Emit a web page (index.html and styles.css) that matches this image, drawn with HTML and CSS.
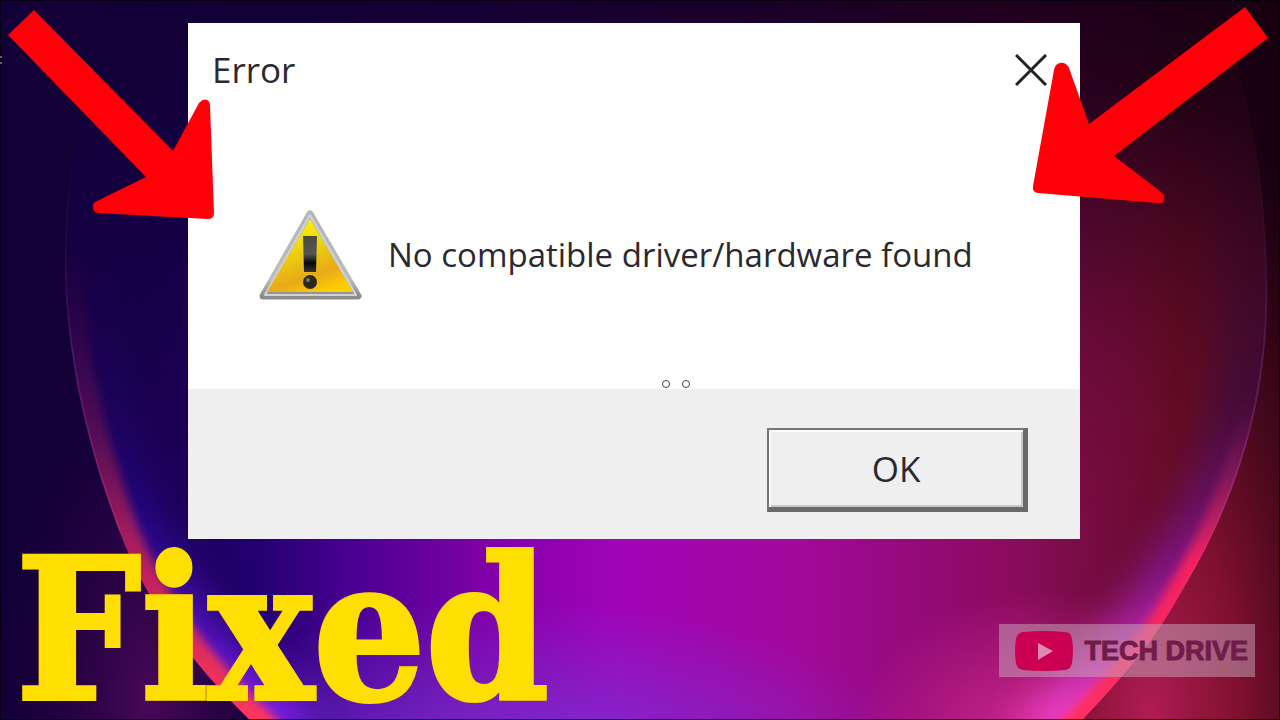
FILE: index.html
```html
<!DOCTYPE html>
<html lang="en">
<head>
<meta charset="utf-8">
<meta name="viewport" content="width=device-width, initial-scale=1">
<title>Fixed: No compatible driver/hardware found</title>
<link rel="stylesheet" href="styles.css">
</head>
<body>
<main class="stage">
  <svg class="wallpaper" viewBox="0 0 1280 720" preserveAspectRatio="none" aria-hidden="true">
    <defs>
      <linearGradient id="outer" x1="0" y1="0" x2="1" y2="0">
        <stop offset="0" stop-color="#120038"/>
        <stop offset=".35" stop-color="#140034"/>
        <stop offset=".8" stop-color="#20001e"/>
        <stop offset="1" stop-color="#180010"/>
      </linearGradient>
      <linearGradient id="inner" x1="0" y1="0" x2="1" y2="0">
        <stop offset="0" stop-color="#1a0048"/>
        <stop offset=".13" stop-color="#1d0058"/>
        <stop offset=".2" stop-color="#220070"/>
        <stop offset=".28" stop-color="#4c0094"/>
        <stop offset=".38" stop-color="#8000a8"/>
        <stop offset=".48" stop-color="#a004b8"/>
        <stop offset=".62" stop-color="#a3089c"/>
        <stop offset=".8" stop-color="#880c5a"/>
        <stop offset=".84" stop-color="#7a0c48"/>
        <stop offset=".92" stop-color="#640c24"/>
        <stop offset="1" stop-color="#5c1030"/>
      </linearGradient>
      <linearGradient id="fade" x1="0" y1="0" x2="0" y2="1">
        <stop offset="0" stop-color="#fff" stop-opacity="0"/>
        <stop offset=".15" stop-color="#fff" stop-opacity=".14"/>
        <stop offset=".5" stop-color="#fff" stop-opacity=".72"/>
        <stop offset=".74" stop-color="#fff"/>
      </linearGradient>
      <mask id="rise" maskUnits="userSpaceOnUse" x="0" y="0" width="1280" height="720">
        <rect width="1280" height="720" fill="url(#fade)"/>
      </mask>
      <linearGradient id="rim" gradientUnits="userSpaceOnUse" x1="0" y1="240" x2="0" y2="720">
        <stop offset="0" stop-color="#801050" stop-opacity="0"/>
        <stop offset=".4" stop-color="#8c1850" stop-opacity=".6"/>
        <stop offset=".7" stop-color="#c82458" stop-opacity=".95"/>
        <stop offset="1" stop-color="#ff3858"/>
      </linearGradient>
      <linearGradient id="rimRight" gradientUnits="userSpaceOnUse" x1="0" y1="400" x2="0" y2="720">
        <stop offset="0" stop-color="#801860" stop-opacity="0"/>
        <stop offset=".25" stop-color="#a82460" stop-opacity=".6"/>
        <stop offset=".5" stop-color="#f42060"/>
        <stop offset="1" stop-color="#ff3060"/>
      </linearGradient>
      <linearGradient id="glow" gradientUnits="userSpaceOnUse" x1="0" y1="200" x2="0" y2="720">
        <stop offset="0" stop-color="#200860" stop-opacity="0"/>
        <stop offset=".6" stop-color="#2808a0" stop-opacity=".6"/>
        <stop offset="1" stop-color="#8420f0"/>
      </linearGradient>
      <linearGradient id="glowRight" gradientUnits="userSpaceOnUse" x1="0" y1="100" x2="0" y2="720">
        <stop offset="0" stop-color="#300838" stop-opacity="0"/>
        <stop offset=".5" stop-color="#3c0c44" stop-opacity=".8"/>
        <stop offset=".78" stop-color="#9018a0" stop-opacity=".85"/>
        <stop offset="1" stop-color="#f040c8"/>
      </linearGradient>
      <linearGradient id="hair" gradientUnits="userSpaceOnUse" x1="0" y1="120" x2="0" y2="540">
        <stop offset="0" stop-color="#6a3c90" stop-opacity="0"/>
        <stop offset=".5" stop-color="#6a3490" stop-opacity=".6"/>
        <stop offset="1" stop-color="#d03870" stop-opacity=".4"/>
      </linearGradient>
      <radialGradient id="ember">
        <stop offset="0" stop-color="#b01c54"/>
        <stop offset=".35" stop-color="#8a1232" stop-opacity=".9"/>
        <stop offset="1" stop-color="#500c18" stop-opacity="0"/>
      </radialGradient>
      <radialGradient id="plum">
        <stop offset="0" stop-color="#480858"/>
        <stop offset="1" stop-color="#300048" stop-opacity="0"/>
      </radialGradient>
      <radialGradient id="violet">
        <stop offset="0" stop-color="#7438d4"/>
        <stop offset="1" stop-color="#7438d4" stop-opacity="0"/>
      </radialGradient>
      <radialGradient id="pink">
        <stop offset="0" stop-color="#d42c94"/>
        <stop offset="1" stop-color="#c82490" stop-opacity="0"/>
      </radialGradient>
      <filter id="soft" filterUnits="userSpaceOnUse" x="-60" y="-60" width="1400" height="860" color-interpolation-filters="sRGB"><feGaussianBlur stdDeviation="5"/></filter>
      <filter id="softer" filterUnits="userSpaceOnUse" x="-60" y="-60" width="1400" height="860" color-interpolation-filters="sRGB"><feGaussianBlur stdDeviation="18"/></filter>
      <clipPath id="petal">
        <path d="M110 0C70 120 60 230 67 310C74 390 93 460 119 530C145 600 190 662 252 722H1080C1125 675 1155 640 1180 594C1225 520 1268 420 1267 290C1266 180 1250 80 1210 0Z"/>
      </clipPath>
    </defs>
    <rect width="1280" height="720" fill="url(#outer)"/>
    <ellipse cx="150" cy="700" rx="150" ry="330" fill="url(#plum)"/>
    <ellipse cx="1150" cy="720" rx="260" ry="640" fill="url(#ember)"/>
    <g mask="url(#rise)">
      <g clip-path="url(#petal)">
        <rect width="1280" height="720" fill="url(#inner)"/>
        <ellipse cx="520" cy="790" rx="420" ry="190" fill="url(#violet)"/>
        <ellipse cx="1040" cy="740" rx="190" ry="150" fill="url(#pink)"/>
        <g fill="none">
          <path filter="url(#softer)" stroke="url(#glow)" stroke-width="90" d="M110 0C70 120 60 230 67 310C74 390 93 460 119 530C145 600 190 662 252 722L280 750"/>
          <path filter="url(#softer)" stroke="url(#glowRight)" stroke-width="90" d="M1050 750L1080 722C1125 675 1155 640 1180 594C1225 520 1268 420 1267 290C1266 180 1250 80 1210 0"/>
          <path filter="url(#soft)" stroke="url(#rim)" stroke-width="38" d="M110 0C70 120 60 230 67 310C74 390 93 460 119 530C145 600 190 662 252 722L280 750"/>
          <path filter="url(#soft)" stroke="url(#rimRight)" stroke-width="28" d="M1050 750L1080 722C1125 675 1155 640 1180 594C1225 520 1268 420 1267 290"/>
          <path stroke="url(#hair)" stroke-width="3" d="M110 0C70 120 60 230 67 310C74 390 93 460 119 530"/>
          <path stroke="url(#hair)" stroke-width="3" d="M1180 594C1225 520 1268 420 1267 290C1266 180 1250 80 1210 0"/>
        </g>
      </g>
    </g>
    <path d="M0 0H1280V720H0Z" fill="none" stroke="#08000c" stroke-opacity=".8" stroke-width="2"/>
    <path d="M0 57h2M0 63h2" stroke="#d8b890" stroke-width="1"/>
  </svg>

  <section class="dialog" role="dialog" aria-labelledby="dialog-title" aria-describedby="dialog-text">
    <header class="titlebar">
      <h1 class="title" id="dialog-title">Error</h1>
      <button class="close" type="button" aria-label="Close">
        <svg viewBox="0 0 32 32" aria-hidden="true"><path d="M1 1L31 31M31 1L1 31"/></svg>
      </button>
    </header>
    <div class="content">
      <svg class="warning" viewBox="0 0 106 96" aria-hidden="true">
        <defs>
          <linearGradient id="metal" x1="0" y1="0" x2="0" y2="1">
            <stop offset="0" stop-color="#b2b4b6"/><stop offset=".8" stop-color="#bcbcbc"/><stop offset="1" stop-color="#8c8c8c"/>
          </linearGradient>
          <linearGradient id="gold" x1=".3" y1="0" x2=".7" y2="1">
            <stop offset="0" stop-color="#fff600"/><stop offset=".45" stop-color="#eccb10"/><stop offset=".75" stop-color="#e9a918"/><stop offset="1" stop-color="#ffd000"/>
          </linearGradient>
          <linearGradient id="bar" x1="0" y1="0" x2="0" y2="1">
            <stop offset="0" stop-color="#4a4a38"/><stop offset=".5" stop-color="#555"/><stop offset=".75" stop-color="#080808"/><stop offset="1" stop-color="#333"/>
          </linearGradient>
        </defs>
        <path d="M52 7L100 89H5Z" fill="url(#metal)" stroke="url(#metal)" stroke-width="7" stroke-linejoin="round"/>
        <path d="M52 8L98 88H7Z" fill="none" stroke="#d0d2d4" stroke-width="2" stroke-linejoin="round"/>
        <path d="M52 12L95 85H9Z" fill="url(#gold)"/>
        <path d="M45 29H59L58 65H46Z" fill="url(#bar)"/>
        <circle cx="52" cy="75" r="7" fill="#292820"/>
        <circle cx="50" cy="73" r="2" fill="#77725a"/>
      </svg>
      <p class="message" id="dialog-text">No compatible driver/hardware found</p>
    </div>
    <svg class="dots" viewBox="0 0 30 10" aria-hidden="true"><circle cx="5" cy="5" r="3.5"/><circle cx="25" cy="5" r="3.5"/></svg>
    <footer class="actions">
      <button class="ok" type="button">OK</button>
    </footer>
  </section>

  <div class="caption">
    <p class="fixed">Fixed</p>
    <div class="channel">
      <svg class="play" viewBox="0 0 58 40" aria-hidden="true">
        <path d="M8 1Q29-1 50 1Q56 1 57 8Q59 20 57 32Q56 38 50 39Q29 41 8 39Q2 38 1 32Q-1 20 1 8Q2 2 8 1Z" fill="#cc0052"/>
        <path d="M23 12L38 20L23 29Z" fill="#dc8aae"/>
      </svg>
      <span class="channel-name">TECH DRIVE</span>
    </div>
  </div>

  <svg class="arrow arrow-left" viewBox="0 0 210 212" aria-hidden="true">
    <path d="M28 2L167 143L193 95Q197 90 201 92Q204 93 204 98L208 205Q208 211 202 211L92 205Q87 204 87 199Q86 195 91 193L140 169L2 27Z"/>
  </svg>
  <svg class="arrow arrow-right" viewBox="0 0 238 200" aria-hidden="true">
    <path d="M214 1L58 118L38 62Q35 56 29 57Q24 58 23 64L2 180Q1 186 7 187L126 197Q132 198 133 194Q134 189 130 186L83 150L237 32Z"/>
  </svg>
</main>
</body>
</html>
```

FILE: styles.css
```css
* {
  box-sizing: border-box;
}

body {
  margin: 0;
  overflow: hidden;
  background: #120038;
  font-family: "Open Sans", "Noto Sans", sans-serif;
}

h1,
p {
  margin: 0;
}

button {
  font: inherit;
  color: inherit;
  cursor: pointer;
}

.stage {
  position: relative;
  isolation: isolate;
  display: flex;
  flex-direction: column;
  min-height: 100vh;
  padding-top: 23px;
}

.wallpaper {
  position: absolute;
  inset: 0;
  z-index: -1;
  width: 100%;
  height: 100%;
}

.dialog {
  position: relative;
  margin: 0 200px 0 188px;
  background: #fff;
  color: #2a2a2e;
}

.titlebar {
  display: flex;
  align-items: center;
  justify-content: space-between;
  padding: 24px 33px 0 24px;
}

.title {
  font-size: 35px;
  line-height: 46px;
  font-weight: 400;
}

.close {
  display: flex;
  padding: 0;
  border: 0;
  background: none;
}

.close svg {
  width: 32px;
  height: 32px;
  fill: none;
  stroke: #222;
  stroke-width: 3;
}

.content {
  display: flex;
  align-items: center;
  gap: 24px;
  padding: 114px 40px 86px 70px;
}

.warning {
  flex: none;
  width: 106px;
  height: 96px;
}

.message {
  font-size: 33px;
  line-height: 48px;
  white-space: nowrap;
}

.dots {
  position: absolute;
  left: 473px;
  bottom: 150px;
  width: 30px;
  height: 10px;
  fill: #fff;
  stroke: #444;
}

.actions {
  display: flex;
  justify-content: flex-end;
  padding: 39px 52px 27px;
  background: #efefef;
}

.ok {
  width: 261px;
  height: 84px;
  padding: 0;
  border: 2px solid #767676;
  border-right: 5px solid #6a6a6a;
  border-bottom: 5px solid #6a6a6a;
  background: #efefef;
  box-shadow: inset 2px 2px #fff, inset -2px -2px #c8c8c8;
  font-size: 35px;
}

.caption {
  display: flex;
  flex: 1;
  align-items: flex-start;
  justify-content: space-between;
  padding: 2px 25px 0 16px;
}

.fixed {
  color: #ffdf00;
  font-family: "DejaVu Serif Condensed", "DejaVu Serif", serif;
  font-size: 196px;
  font-weight: 700;
  font-stretch: condensed;
  line-height: 178px;
  -webkit-text-stroke: 4px #ffdf00;
}

.channel {
  display: flex;
  align-items: center;
  gap: 10px;
  height: 53px;
  margin-top: 83px;
  padding: 0 7px 0 15px;
  background: rgb(200 170 190 / 50%);
}

.play {
  width: 60px;
  height: 40px;
}

.channel-name {
  color: #701c4a;
  font-family: "Liberation Sans", Arial, sans-serif;
  font-size: 27px;
  line-height: 56px;
  font-weight: 700;
  white-space: nowrap;
  -webkit-text-stroke: 1px #701c4a;
}

.arrow {
  position: absolute;
  fill: #ff0008;
}

.arrow-left {
  top: 8px;
  left: 6px;
  width: 210px;
  height: 212px;
}

.arrow-right {
  top: 6px;
  right: 11px;
  width: 238px;
  height: 200px;
}
```
